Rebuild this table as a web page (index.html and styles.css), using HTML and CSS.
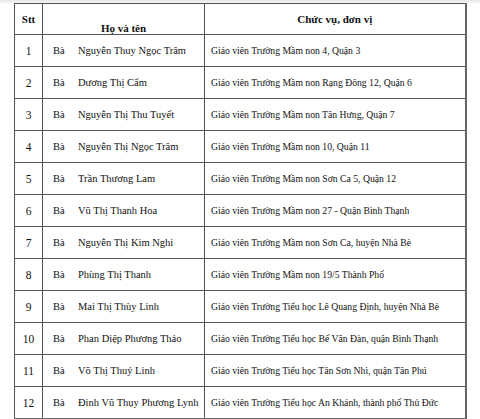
FILE: index.html
```html
<!DOCTYPE html>
<html lang="vi">
<head>
<meta charset="utf-8">
<link rel="stylesheet" href="styles.css">
</head>
<body>
<div class="top-shade"></div>
<div class="page">
<table class="list">
<colgroup><col class="c-stt"><col class="c-name"><col class="c-unit"></colgroup>
<thead>
<tr><th class="h-stt">Stt</th><th class="h-name">Họ và tên</th><th class="h-unit">Chức vụ, đơn vị</th></tr>
</thead>
<tbody>
<tr><td class="stt">1</td><td class="name"><span class="title">Bà</span>Nguyễn Thuy Ngọc Trâm</td><td class="unit">Giáo viên Trường Mầm non 4, Quận 3</td></tr>
<tr><td class="stt">2</td><td class="name"><span class="title">Bà</span>Dương Thị Cẩm</td><td class="unit">Giáo viên Trường Mầm non Rạng Đông 12, Quận 6</td></tr>
<tr><td class="stt">3</td><td class="name"><span class="title">Bà</span>Nguyễn Thị Thu Tuyết</td><td class="unit">Giáo viên Trường Mầm non Tân Hưng, Quận 7</td></tr>
<tr><td class="stt">4</td><td class="name"><span class="title">Bà</span>Nguyễn Thị Ngọc Trâm</td><td class="unit">Giáo viên Trường Mầm non 10, Quận 11</td></tr>
<tr><td class="stt">5</td><td class="name"><span class="title">Bà</span>Trần Thương Lam</td><td class="unit">Giáo viên Trường Mầm non Sơn Ca 5, Quận 12</td></tr>
<tr><td class="stt">6</td><td class="name"><span class="title">Bà</span>Vũ Thị Thanh Hoa</td><td class="unit">Giáo viên Trường Mầm non 27 - Quận Bình Thạnh</td></tr>
<tr><td class="stt">7</td><td class="name"><span class="title">Bà</span>Nguyễn Thị Kim Nghi</td><td class="unit">Giáo viên Trường Mầm non Sơn Ca, huyện Nhà Bè</td></tr>
<tr><td class="stt">8</td><td class="name"><span class="title">Bà</span>Phùng Thị Thanh</td><td class="unit">Giáo viên Trường Mầm non 19/5 Thành Phố</td></tr>
<tr><td class="stt">9</td><td class="name"><span class="title">Bà</span>Mai Thị Thùy Linh</td><td class="unit">Giáo viên Trường Tiểu học Lê Quang Định, huyện Nhà Bè</td></tr>
<tr><td class="stt">10</td><td class="name"><span class="title">Bà</span>Phan Diệp Phương Thảo</td><td class="unit">Giáo viên Trường Tiểu học Bế Văn Đàn, quận Bình Thạnh</td></tr>
<tr><td class="stt">11</td><td class="name"><span class="title">Bà</span>Võ Thị Thuỷ Linh</td><td class="unit">Giáo viên Trường Tiểu học Tân Sơn Nhì, quận Tân Phú</td></tr>
<tr><td class="stt">12</td><td class="name"><span class="title">Bà</span>Đinh Vũ Thụy Phương Lynh</td><td class="unit">Giáo viên Trường Tiểu học An Khánh, thành phố Thủ Đức</td></tr>
</tbody>
</table>
</div>
<div class="bottom-shade"></div>
</body>
</html>
```
FILE: styles.css
```css
html, body {
  margin: 0;
  padding: 0;
}
body {
  width: 480px;
  height: 419px;
  overflow: hidden;
  background: #ffffff;
  font-family: "Liberation Serif", "Times New Roman", serif;
  color: #111;
}
.top-shade {
  height: 3px;
  background: linear-gradient(#e6e6e6, #f6f6f6);
}
.page {
  padding: 0 0 0 14px;
  background: #fff;
}
.list {
  border-collapse: collapse;
  width: 451px;
  table-layout: fixed;
  border: 1px solid #555;
  border-right: 2px solid #666;
  border-bottom: 2px solid #666;
}
.c-stt { width: 28px; }
.c-name { width: 162px; }
.c-unit { width: 261px; }
.list th, .list td {
  border: 1px solid #555;
  padding: 0;
  height: 30px;
  white-space: nowrap;
  overflow: hidden;
}
.list th {
  font-weight: bold;
  font-size: 11px;
}
.h-stt { vertical-align: middle; padding-bottom: 1px; }
.h-name { vertical-align: bottom; padding-bottom: 2px; }
.h-unit { vertical-align: middle; padding-bottom: 5px; }
.stt {
  text-align: center;
  vertical-align: middle;
  font-size: 11.5px;
  padding-bottom: 1px;
}
.name {
  padding-left: 10px !important;
  padding-bottom: 1px !important;
  font-size: 10.5px;
}
.title {
  display: inline-block;
  width: 25px;
}
.unit {
  padding-left: 6px !important;
  padding-bottom: 1px !important;
  font-size: 9.7px;
}
.bottom-shade {
  height: 14px;
  background: linear-gradient(#f4f4f4, #ececec);
}
```
